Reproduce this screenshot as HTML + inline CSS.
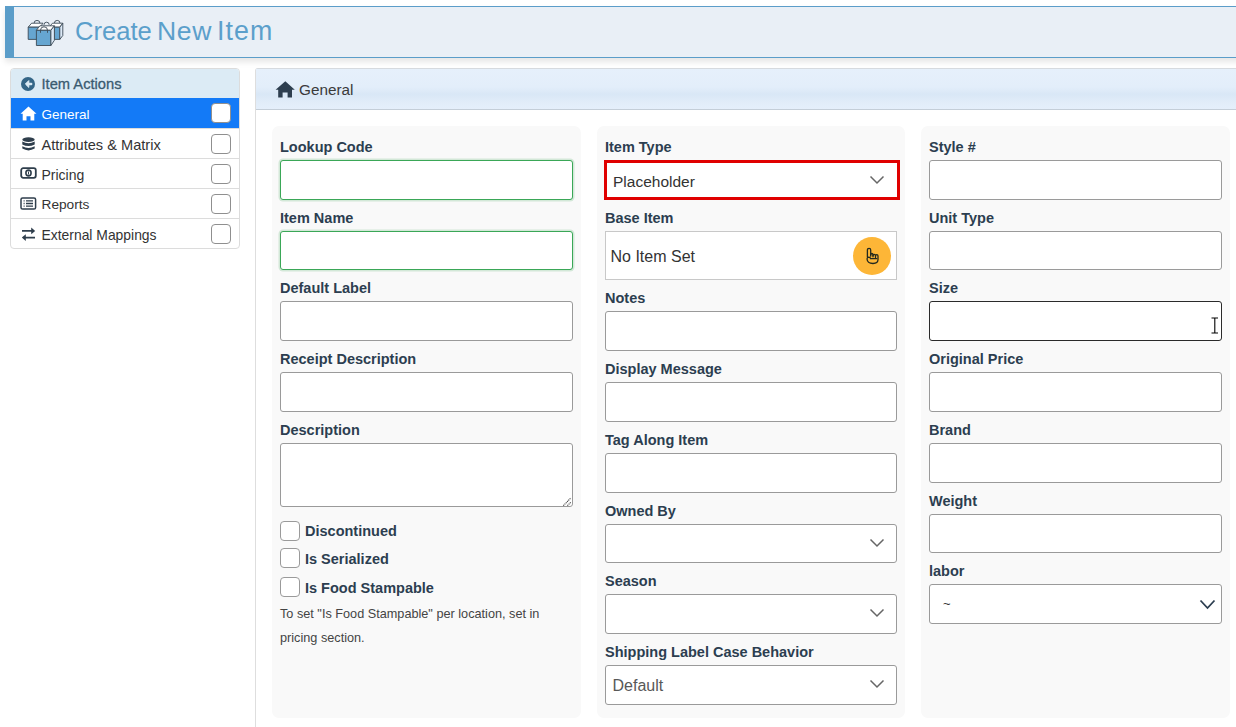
<!DOCTYPE html>
<html><head><meta charset="utf-8">
<style>
*{box-sizing:border-box;margin:0;padding:0}
html,body{width:1236px;height:727px;overflow:hidden;background:#fff;font-family:"Liberation Sans",sans-serif;color:#333}
.abs{position:absolute}
#hdr{left:5px;top:6px;width:1240px;height:51.5px;background:#e9eff6;border-top:1px solid #5b9dc9;border-bottom:1px solid #5b9dc9;border-left:9px solid #5b9dc9;box-shadow:0 4px 6px rgba(0,0,0,.10)}
#title{left:75px;top:16px;font-size:26.5px;color:#5b9fcb;white-space:nowrap;line-height:30px}
#side{left:10px;top:68px;width:230px;height:181px;border:1px solid #dcdcdc;border-radius:4px;overflow:hidden;background:#fff}
.srow{position:absolute;left:0;width:228px;height:30px;font-size:13.6px;line-height:30px;white-space:nowrap;color:#333}
.srow span.t{position:absolute;left:30.5px;top:2px}
.srow .cb{position:absolute;left:200px;top:5px;width:20px;height:20px;border:1px solid #8f8f8f;border-radius:4px;background:#fff}
.srow svg{position:absolute}
#panel{left:255px;top:68px;width:1000px;height:670px;border-left:1px solid #dedede;border-top:1px solid #d6dadf;border-top-left-radius:3px}
#phdr{left:0;top:0;width:1000px;height:41px;background:linear-gradient(#e6f0fb 0%,#e3eefa 45%,#d9e7f6 63%,#e2edf9 85%,#e5effb 100%);border-bottom:1px solid #c4ced8}
.card{position:absolute;top:126px;height:591.7px;background:#f9f9f9;border-radius:7px}
.lbl{position:absolute;font-size:14.5px;font-weight:700;color:#2c3e50;white-space:nowrap;line-height:18px}
.inp{position:absolute;height:40px;background:#fff;border:1px solid #9a9a9a;border-radius:3px}
.chev{position:absolute;right:12px;top:14px}
.txt{position:absolute;font-size:15.5px;color:#333;white-space:nowrap;line-height:18px}
.cbx{position:absolute;left:280px;width:20px;height:20px;border:1px solid #9a9a9a;border-radius:4px;background:#fff}
.clbl{position:absolute;left:305px;font-size:14.5px;font-weight:700;color:#2c3e50;white-space:nowrap;line-height:18px}
</style></head><body>
<div id="hdr" class="abs"></div>
<svg class="abs" style="left:24px;top:16px" width="44" height="34" viewBox="0 0 44 34">
 <g stroke="#3b4a56" stroke-width="0.9" stroke-linejoin="round" fill="none">
  <!-- back left -->
  <path d="M10 7.4 A3 3 0 0 1 16 7.4" />
  <polygon points="4.2,11.2 7.6,7.2 19,7.2 16,11.2" fill="#fff"/>
  <rect x="4.2" y="11.2" width="12" height="12.2" fill="#66a6d1"/>
  <!-- back right -->
  <path d="M30.4 7.2 A2.8 2.8 0 0 1 36 7.2" />
  <polygon points="25,11.2 28.5,7.2 38.8,7.2 35.8,11.2" fill="#fff"/>
  <rect x="30.4" y="11.2" width="5.4" height="12.2" fill="#66a6d1"/>
  <polygon points="35.8,11.2 38.8,7.2 38.8,19.5 35.8,23.4" fill="#dce9f7"/>
  <!-- middle back handle -->
  <path d="M20 8.8 A2.6 2.6 0 0 1 25.2 8.8" />
  <!-- front -->
  <polygon points="12.4,14.3 15.9,9.8 30.4,9.8 26.9,14.3" fill="#fff"/>
  <path d="M16.5 16.5 V14.3 A3.5 3.5 0 0 1 23.5 14.3 V16.5" />
  <rect x="12.4" y="14.3" width="14.5" height="15.2" fill="#66a6d1"/>
  <path d="M16.5 14.3 V16.8 M23.5 14.3 V16.8"/>
  <polygon points="26.9,14.3 30.4,9.8 30.4,24.3 26.9,29.5" fill="#dce9f7"/>
 </g>
</svg>
<div id="title" class="abs"><span style="font-size:25.6px">Create</span><span style="position:absolute;left:82px;font-size:26.6px;letter-spacing:0.6px">New</span><span style="position:absolute;left:142px;font-size:26.8px;letter-spacing:1.1px">Item</span></div>

<div id="side" class="abs">
  <div class="srow" style="top:0;background:#dcebf5;color:#3a5a70;font-size:14.7px;-webkit-text-stroke:0.3px #3a5a70">
    <svg style="left:9.8px;top:7.8px" width="14" height="14" viewBox="0 0 14 14"><circle cx="7" cy="7" r="7" fill="#356687"/><path d="M7.8 3.6 L4.4 7 L7.8 10.4Z" fill="#dcebf5" stroke="#dcebf5" stroke-width="1" stroke-linejoin="round"/><path d="M6 7 H10.2" stroke="#dcebf5" stroke-width="2.4" stroke-linecap="round"/></svg>
    <span class="t" style="top:0">Item Actions</span></div>
  <div class="srow" style="top:29px;background:#137af7;color:#fff">
    <svg style="left:9px;top:8px" width="17" height="15" viewBox="0 0 17 15"><path d="M8.5 0.5 L0.5 7.8 H2.7 V14.5 H6.5 V10.2 H10.5 V14.5 H14.3 V7.8 H16.5 Z" fill="#fff"/></svg>
    <span class="t" style="font-size:13.5px">General</span><div class="cb"></div></div>
  <div class="srow" style="top:59px;border-top:1px solid #dcdcdc">
    <svg style="left:11px;top:8px" width="13" height="14" viewBox="0 0 13 14"><ellipse cx="6.5" cy="2.6" rx="6.2" ry="2.4" fill="#2f3e4c"/><path d="M0.3 4.6 Q6.5 8 12.7 4.6 V7.4 Q6.5 10.6 0.3 7.4Z" fill="#2f3e4c"/><path d="M0.3 9.3 Q6.5 12.6 12.7 9.3 V11.6 Q6.5 15.2 0.3 11.6Z" fill="#2f3e4c"/></svg>
    <span class="t" style="top:0.7px;font-size:14.6px">Attributes &amp; Matrix</span><div class="cb"></div></div>
  <div class="srow" style="top:89px;border-top:1px solid #dcdcdc">
    <svg style="left:9px;top:8px" width="17" height="12" viewBox="0 0 17 12"><rect x="1.2" y="1.2" width="14.6" height="9.6" rx="2" fill="none" stroke="#2f3e4c" stroke-width="1.8"/><ellipse cx="8.5" cy="6" rx="2.6" ry="2.9" fill="none" stroke="#2f3e4c" stroke-width="1.6"/><path d="M8.5 4.5 V7.5" stroke="#2f3e4c" stroke-width="1"/></svg>
    <span class="t" style="top:0.7px;font-size:14px">Pricing</span><div class="cb"></div></div>
  <div class="srow" style="top:119px;border-top:1px solid #dcdcdc">
    <svg style="left:9px;top:8px" width="17" height="13" viewBox="0 0 17 13"><rect x="1" y="1" width="14.6" height="11" rx="1.6" fill="none" stroke="#2f3e4c" stroke-width="1.5"/><path d="M3.6 3.9 H4.6 M3.6 6.5 H4.6 M3.6 9.1 H4.6 M6 3.9 H13 M6 6.5 H13 M6 9.1 H13" stroke="#2f3e4c" stroke-width="1.3"/></svg>
    <span class="t" style="top:0.7px;font-size:13.7px">Reports</span><div class="cb"></div></div>
  <div class="srow" style="top:149px;border-top:1px solid #dcdcdc">
    <svg style="left:10px;top:8px" width="15" height="15" viewBox="0 0 15 15"><path d="M1 3.9 H11" stroke="#2f3e4c" stroke-width="1.8"/><path d="M10.2 0.6 L14.2 3.9 L10.2 7.2Z" fill="#2f3e4c"/><path d="M4 10.6 H14" stroke="#2f3e4c" stroke-width="1.8"/><path d="M4.8 7.3 L0.8 10.6 L4.8 13.9Z" fill="#2f3e4c"/></svg>
    <span class="t" style="top:0.7px;font-size:13.9px">External Mappings</span><div class="cb"></div></div>
</div>

<div id="panel" class="abs">
  <div id="phdr" class="abs"></div>
  <svg class="abs" style="left:19px;top:12px" width="21" height="17" viewBox="0 0 21 17"><path d="M10.3 0.2 L0.6 8.7 H3.2 V16.6 H7.6 V11.6 H12.6 V16.6 H17 V8.7 H19.8 Z" fill="#2d3e4f"/></svg>
  <div class="abs" style="left:43px;top:11.5px;font-size:15.3px;line-height:18px;color:#3a3a3a">General</div>
</div>

<div class="card" style="left:272px;width:309px"></div>
<div class="card" style="left:597px;width:308px"></div>
<div class="card" style="left:921px;width:309px"></div>

<!-- col1 -->
<div class="lbl" style="left:280px;top:138px">Lookup Code</div>
<div class="inp" style="left:280px;top:160px;width:293px;border-color:#3aa757;box-shadow:0 0 0 1.5px rgba(58,167,87,.2)"></div>
<div class="lbl" style="left:280px;top:209px">Item Name</div>
<div class="inp" style="left:280px;top:231px;width:293px;height:39px;border-color:#3aa757;box-shadow:0 0 0 1.5px rgba(58,167,87,.2)"></div>
<div class="lbl" style="left:280px;top:279px">Default Label</div>
<div class="inp" style="left:280px;top:301px;width:293px"></div>
<div class="lbl" style="left:280px;top:350px">Receipt Description</div>
<div class="inp" style="left:280px;top:372px;width:293px"></div>
<div class="lbl" style="left:280px;top:421px">Description</div>
<div class="inp" style="left:280px;top:443px;width:293px;height:64px">
  <svg class="abs" style="left:281px;top:52px" width="10" height="10" viewBox="0 0 10 10"><path d="M1.3 9.6 L9 1.9 M5.4 9.6 L9 6" stroke="#444" stroke-width="1.1" stroke-dasharray="1.1 0.7"/></svg>
</div>
<div class="cbx" style="top:521px"></div>
<div class="clbl" style="top:522px">Discontinued</div>
<div class="cbx" style="top:548px"></div>
<div class="clbl" style="top:550px">Is Serialized</div>
<div class="cbx" style="top:577px"></div>
<div class="clbl" style="top:579px">Is Food Stampable</div>
<div class="abs" style="left:280px;top:601.5px;width:290px;font-size:12.7px;line-height:24px;color:#444">To set "Is Food Stampable" per location, set in<br>pricing section.</div>

<!-- col2 -->
<div class="lbl" style="left:605px;top:138px">Item Type</div>
<div class="inp" style="left:604px;top:160px;width:296px;height:40px;border:3px solid #e00000;border-radius:0">
  <div class="txt" style="left:6px;top:9.5px">Placeholder</div>
  <svg class="chev" style="right:12px;top:11.5px" width="16" height="10" viewBox="0 0 16 10"><path d="M1.5 1.5 L8 8 L14.5 1.5" stroke="#666" stroke-width="1.5" fill="none"/></svg>
</div>
<div class="lbl" style="left:605px;top:209px">Base Item</div>
<div class="inp" style="left:605px;top:231px;width:292px;height:49px;border-color:#c8c8c8;border-radius:0">
  <div class="txt" style="left:4.5px;top:16px;font-size:16px">No Item Set</div>
  <div class="abs" style="left:247px;top:5px;width:38px;height:38px;border-radius:50%;background:#fdb637"></div>
  <svg class="abs" style="left:256px;top:12px" width="22" height="22" viewBox="0 0 22 22"><g stroke="#23291f" stroke-width="1.3" fill="none" stroke-linecap="round" stroke-linejoin="round"><path d="M5.4 12.8 V5.9 Q5.4 4.3 7.05 4.3 Q8.7 4.3 8.7 5.9 V12.2"/><path d="M8.7 10.9 Q8.8 9.5 9.9 9.5 Q11 9.5 11 10.9 V12.8"/><path d="M11 11.7 Q11 10.4 12.25 10.4 Q13.5 10.4 13.5 11.7 V13.6"/><path d="M13.5 12.1 Q13.5 10.7 14.75 10.7 Q16 10.7 16 12.1 V15.6 Q16 19.5 11 19.5 Q5.3 19.5 5.1 15.3 Q5 13.1 6.8 13.1 Q8.4 13.2 8.5 14.6 H14.6"/></g></svg>
</div>
<div class="lbl" style="left:605px;top:289px">Notes</div>
<div class="inp" style="left:605px;top:311px;width:292px"></div>
<div class="lbl" style="left:605px;top:360px">Display Message</div>
<div class="inp" style="left:605px;top:382px;width:292px"></div>
<div class="lbl" style="left:605px;top:431px">Tag Along Item</div>
<div class="inp" style="left:605px;top:453px;width:292px"></div>
<div class="lbl" style="left:605px;top:502px">Owned By</div>
<div class="inp" style="left:605px;top:524px;width:292px;height:39px">
  <svg class="chev" style="right:11px;top:13px" width="16" height="10" viewBox="0 0 16 10"><path d="M1.5 1.5 L8 8 L14.5 1.5" stroke="#666" stroke-width="1.5" fill="none"/></svg>
</div>
<div class="lbl" style="left:605px;top:572px">Season</div>
<div class="inp" style="left:605px;top:594px;width:292px">
  <svg class="chev" style="right:11px;top:13px" width="16" height="10" viewBox="0 0 16 10"><path d="M1.5 1.5 L8 8 L14.5 1.5" stroke="#666" stroke-width="1.5" fill="none"/></svg>
</div>
<div class="lbl" style="left:605px;top:643px">Shipping Label Case Behavior</div>
<div class="inp" style="left:605px;top:665px;width:292px">
  <div class="txt" style="left:6.5px;top:11px;color:#585858;font-size:16px">Default</div>
  <svg class="chev" style="right:11px;top:13px" width="16" height="10" viewBox="0 0 16 10"><path d="M1.5 1.5 L8 8 L14.5 1.5" stroke="#666" stroke-width="1.5" fill="none"/></svg>
</div>

<!-- col3 -->
<div class="lbl" style="left:929px;top:138px">Style #</div>
<div class="inp" style="left:929px;top:160px;width:293px"></div>
<div class="lbl" style="left:929px;top:209px">Unit Type</div>
<div class="inp" style="left:929px;top:231px;width:293px;height:39px"></div>
<div class="lbl" style="left:929px;top:279px">Size</div>
<div class="inp" style="left:929px;top:301px;width:293px;border:1.5px solid #2a2a2a">
  <svg class="abs" style="left:280.5px;top:14.5px" width="9" height="17" viewBox="0 0 9 17"><path d="M0.5 1 H7 M0.5 16 H7 M3.8 1 V16" stroke="#000" stroke-width="1.1" fill="none"/></svg>
</div>
<div class="lbl" style="left:929px;top:350px">Original Price</div>
<div class="inp" style="left:929px;top:372px;width:293px"></div>
<div class="lbl" style="left:929px;top:421px">Brand</div>
<div class="inp" style="left:929px;top:443px;width:293px"></div>
<div class="lbl" style="left:929px;top:492px">Weight</div>
<div class="inp" style="left:929px;top:514px;width:293px;height:39px"></div>
<div class="lbl" style="left:929px;top:562px">labor</div>
<div class="inp" style="left:929px;top:584px;width:293px">
  <div class="txt" style="left:13px;top:10px;font-size:13px">~</div>
  <svg class="chev" style="right:5px;top:14px" width="17" height="11" viewBox="0 0 17 11"><path d="M1.5 1.5 L8.5 9 L15.5 1.5" stroke="#2c3e50" stroke-width="1.8" fill="none"/></svg>
</div>

</body></html>
